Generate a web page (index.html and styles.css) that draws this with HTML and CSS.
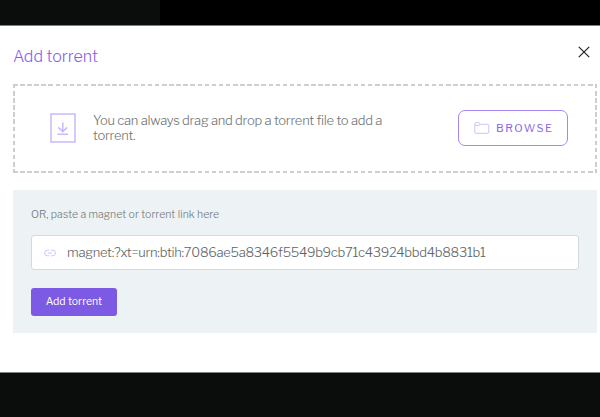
FILE: index.html
```
<!DOCTYPE html>
<html lang="en">
<head>
<meta charset="UTF-8">
<meta name="viewport" content="width=device-width, initial-scale=1.0">
<title>Add torrent</title>
<link rel="stylesheet" href="styles.css">
</head>
<body>
<div class="backdrop-top">
  <div class="backdrop-sidebar"></div>
</div>

<!-- Modal -->
<div class="modal">
  <div class="modal-header">
    <h1 class="modal-title">Add torrent</h1>
    <button class="close-btn" aria-label="Close">
      <svg width="12" height="12" viewBox="0 0 12 12"><path d="M.8.8l10.4 10.4M11.2.8L.8 11.2"/></svg>
    </button>
  </div>

  <!-- Drop area -->
  <div class="drop-zone">
    <svg class="drop-icon" width="26" height="30" viewBox="0 0 26 30">
      <path d="M1 1h24v28H1zM7.5 21.2h10.6M12.8 9.5v9.2M8.4 14.4l4.4 4.4 4.4-4.4"/>
    </svg>
    <p class="drop-text">You can always drag and drop a torrent file to add a torrent.</p>
    <button class="browse-btn">
      <svg width="16" height="12" viewBox="0 0 16 12"><path d="M.8 10.2V1.6q0-.9.9-.9h3.2q.8 0 .8.9 0 .7.8.7h7.2q1.1 0 1.1 1.1v6.7q0 1.2-1.2 1.2H2q-1.2 0-1.2-1.1zM.8 3.4h4.1q.8 0 .8-.9"/></svg>
      <span>BROWSE</span>
    </button>
  </div>

  <!-- Magnet link -->
  <div class="link-box">
    <label class="link-label" for="link">OR, paste a magnet or torrent link here</label>
    <div class="link-field">
      <svg width="12" height="8" viewBox="0 0 12 8"><path d="M5.2 1.2H3.4a2.8 2.8 0 0 0 0 5.6h1.8M6.8 1.2h1.8a2.8 2.8 0 0 1 0 5.6H6.8M3.8 4h4.4"/></svg>
      <input type="text" class="link-input" id="link" value="magnet:?xt=urn:btih:7086ae5a8346f5549b9cb71c43924bbd4b8831b1">
    </div>
    <button class="add-btn">Add torrent</button>
  </div>
</div>
</body>
</html>
```
FILE: styles.css
```
/* General Styles */
* {
  box-sizing: border-box;
}
body {
  margin: 0;
  height: 417px;
  overflow: hidden;
  background-color: #0a0d0c;
  color: #707475;
  font-family: "Libre Franklin", Inter, sans-serif;
  font-weight: 300;
}
button {
  font-family: inherit;
  cursor: pointer;
}
svg {
  display: block;
  flex: none;
  fill: none;
}
.backdrop-top {
  height: 25px;
  background-color: #000;
}
.backdrop-sidebar {
  width: 160px;
  height: 25px;
  background-color: #0a0d0c;
}
/* Modal Styles */
.modal {
  height: 348px;
  padding: 0 3px 0 13px;
  background-color: #fff;
  border-top: 1px solid #808080;
  border-bottom: 1px solid #808080;
}
.modal-header {
  display: flex;
  justify-content: space-between;
  height: 58px;
  padding: 20px 7px 0 0;
}
.modal-title {
  margin: 0;
  color: #8560ea;
  font-size: 16px;
  line-height: 22px;
  font-weight: 300;
}
.close-btn {
  width: 12px;
  height: 12px;
  padding: 0;
  border: none;
  background: none;
}
.close-btn svg {
  stroke: #222;
  stroke-width: 1.2;
}
/* Drop Area Styles */
.drop-zone {
  --dash: #cbcfd5 0 4.5px, transparent 4.5px 7.1px;
  display: flex;
  align-items: center;
  height: 89px;
  padding: 0 29px 1px 37px;
  background:
    repeating-linear-gradient(90deg, var(--dash)) top / 100% 2px no-repeat,
    repeating-linear-gradient(90deg, var(--dash)) bottom / 100% 2px no-repeat,
    repeating-linear-gradient(180deg, var(--dash)) left / 2px 100% no-repeat,
    repeating-linear-gradient(180deg, var(--dash)) right / 2px 100% no-repeat;
}
.drop-icon {
  stroke: #c9b8fb;
  stroke-width: 1.5;
}
.drop-text {
  width: 320px;
  margin: 0 auto 0 17px;
  font-size: 13px;
  line-height: 15px;
  letter-spacing: -0.26px;
}
.browse-btn {
  display: flex;
  align-items: center;
  width: 110px;
  height: 36px;
  padding: 0 0 0 15px;
  border: 1px solid #a587f1;
  border-radius: 7px;
  background-color: #fff;
  color: #8a65e8;
  font-size: 11px;
  font-weight: 400;
  letter-spacing: 1.5px;
}
.browse-btn svg {
  margin-right: 6px;
  stroke: #cfc1fa;
}
/* Magnet Link Styles */
.link-box {
  height: 143px;
  margin-top: 17px;
  padding: 17px 18px 0;
  background-color: #edf2f5;
}
.link-label {
  display: block;
  height: 28px;
  font-size: 10.5px;
  line-height: 16px;
  letter-spacing: 0.05px;
}
.link-field {
  display: flex;
  align-items: center;
  height: 35px;
  padding-left: 12px;
  border: 1px solid #d5d9de;
  border-radius: 3px;
  background-color: #fff;
}
.link-field svg {
  stroke: #d0c3fa;
}
.link-input {
  flex-grow: 1;
  height: 33px;
  margin-left: 11px;
  padding: 0 0 2px;
  border: none;
  outline: none;
  background: none;
  color: #606466;
  font: inherit;
  font-size: 13px;
  letter-spacing: -0.28px;
}
.add-btn {
  display: block;
  width: 86px;
  height: 28px;
  margin-top: 18px;
  padding: 0 0 1px;
  border: none;
  border-radius: 3px;
  background-color: #7d5ae3;
  color: #fff;
  font-size: 10.5px;
  font-weight: 400;
}
```
